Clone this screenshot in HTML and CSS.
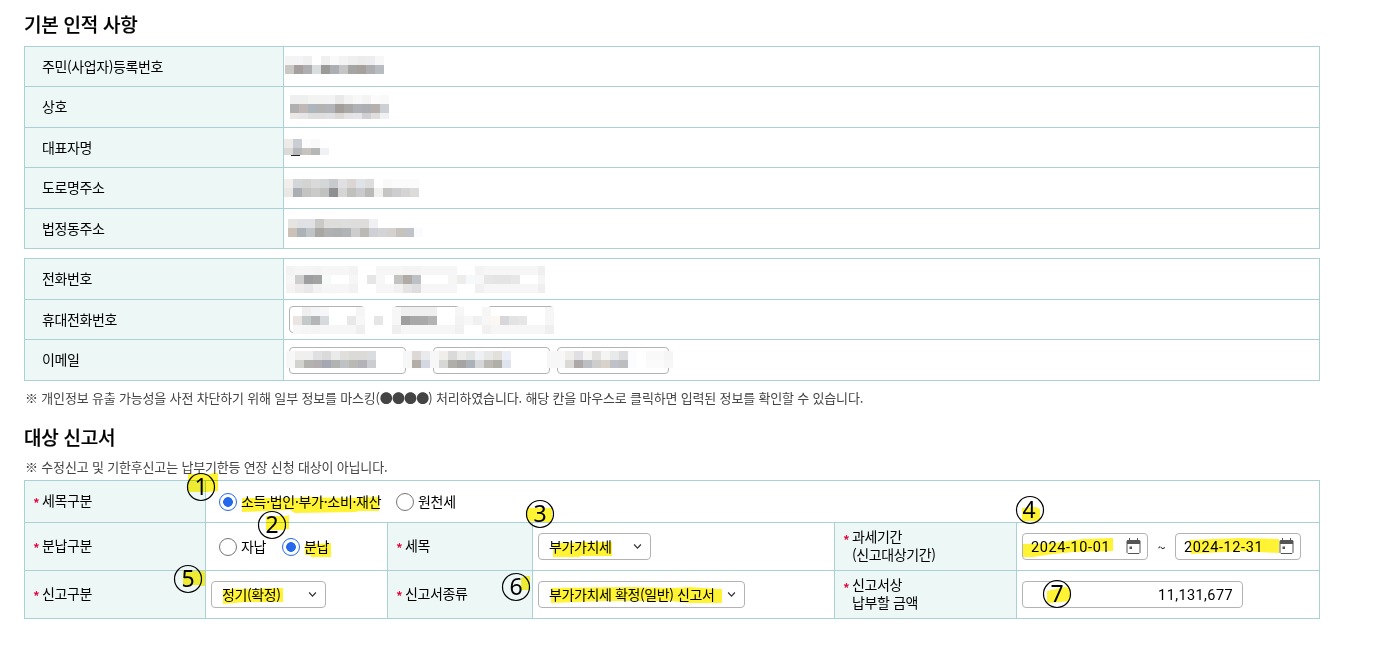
FILE: index.html
```html
<!DOCTYPE html>
<html lang="ko">
<head>
<meta charset="utf-8">
<title>납부기한등 연장 신청</title>
<link rel="stylesheet" href="styles.css">
</head>
<body>
<main class="page">
  <h2 class="title">기본 인적 사항</h2>
  <section class="table basic">
    <div class="th">주민(사업자)등록번호</div>
    <div class="td"><div class="mosaic m-reg" data-rows="f4f4f4 f4f4f6 f0f0f0 - f0f0f0 f9f9f9 f3f3f3 efefef ececec ededef f7f7f7|c9c8c5 a59f9d aeaeb0 d8dddd 9a9a98 abaeb2 c5c5c5 a5a5a3 a6a19c aeadb0 b7bcc1"></div></div>
    <div class="th">상호</div>
    <div class="td"><div class="mosaic m-name" data-rows="efefef efefef f3f3f2 f3f3f3 f3f3f3 e9e9e9 f3f3f3 f8f8f8 f4f4f4 fbfbfb f9f9f9|b1b0b1 bfb8b6 adb5bd b3b3b1 b1b5b9 a39e9a aaa8a6 afb1b6 adaeb2 b5b0ad ccd0d4|ebe7e5 e5e5e7 dededd dedede dfe0e1 dcd8d6 e3e3e4 e5e5e7 d0d0d2 e0dedd f0f1f3"></div></div>
    <div class="th">대표자명</div>
    <div class="td"><div class="mosaic m-ceo" data-rows="eeeae7 cacdd3 fcfcfc f9f9f9 fefefe|dcdad8 b7b8bc c7c3bf b5b7b5 f1f2f6"></div><i class="ceo-line"></i></div>
    <div class="th">도로명주소</div>
    <div class="td"><div class="mosaic m-road" data-rows="f2eeeb d4d7da d3d3d1 dadada d4d6d7 c9cacd e0e0e2 dbd6d3 dfe2e6 dddddd - f9f9f9 fbfbfb fbfbfb fbfbfb|e9e8e4 abafb3 c3c3c1 cacac9 c0c2c0 8f8f92 d5d5d5 c0c0bc cacace b9b9b8 f0f0ef c5c5c4 cdcdcf d5d4d3 dbdbdc"></div></div>
    <div class="th">법정동주소</div>
    <div class="td"><div class="mosaic m-law" data-rows="e5e4e0 dfe1e5 dfe1e4 c9c9c8 dfdddb dddddb dddede dddddd dedddc eff0f2 - - - - -|cbc1b7 abb3b9 c1c4c6 a9a7a1 b0b1b1 adafb0 b2b3b6 cdcdce bab9b3 cfd0d7 d3d4d6 d5d1ce c6c2bc c0c4c8 f9fbfe"></div></div>
  </section>

  <section class="table contact">
    <div class="th">전화번호</div>
    <div class="td"><div class="mosaic m-tel" data-rows="f3f3f3 f6f6f6 f5f5f5 f4f4f4 f6f6f6 f6f6f6 f6f6f6 f3f3f3 - - f6f6f6 f6f6f6 f6f6f6 f4f4f4 f4f4f4 f6f6f6 f6f6f6 f6f6f6 f6f6f6 - - f3f3f3 f6f6f6 f6f6f6 f6f6f6 f6f6f6 f6f6f6 f6f6f6 efefef|f6f6f6 cecece 9e9d9f a3a3a3 f6faf9 - - f6f6f6 - e6e6e6 f7f7f7 - c3c3c1 b1aba7 bdc1c6 - - - f6f6f6 ededec f7f8fb f7f7f7 e6e6e6 e4e4e4 e4e4e4 e7e7e7 - - f5f5f5|f3f3f3 efedec e8e8ea f2f2f2 f4f7f6 f6f6f6 f6f6f6 f2f2f2 - - f6f6f6 f6f6f6 f2f1ef e4e4e4 dedee0 f6f6f6 f6f6f6 f6f6f6 f6f6f6 - - f1f1f1 f6f6f6 f6f6f6 f6f6f6 f6f6f6 f6f6f6 f6f6f6 efefef"></div></div>
    <div class="th">휴대전화번호</div>
    <div class="td fields mobile"><i class="box"></i><i class="box"></i><i class="box"></i>
      <div class="mosaic m-mobile" data-rows="ffffff efefef f4f5f6 f7f7f9 ffffff ffffff ffffff f5f5f5 - - - f7f7f7 efefef efefef efefef efefef ffffff ffffff f6f6f6 - - f6f6f6 ffffff ffffff ffffff ffffff ffffff ffffff f6f6f6|ebe4e2 c4cac9 b4b5b6 d8d9dc ffffff ffffff e8e8e8 f7f7f7 - e6e6e6 - f7f7f7 a09f9f a8a8a8 a8a9a8 b3b3b6 ffffff ffffff f3f3f3 f7f7f7 eff0f2 f7f7f7 fdf7f3 d7d7da e2e3e5 e6e6e7 ffffff ffffff f6f6f6|f7f7f7 f5f5f5 f4f4f4 f6f6f6 f6f6f6 f6f6f6 f6f6f6 efefef - - - efefef f6f6f6 f6f6f6 f6f6f6 f6f6f6 f6f6f6 f6f6f6 f1f1f1 - - f1f1f1 f6f6f6 f6f6f6 f6f6f6 f6f6f6 f6f6f6 f6f6f6 efefef"></div></div>
    <div class="th">이메일</div>
    <div class="td fields email"><i class="box"></i><i class="box"></i><i class="box"></i>
      <div class="mosaic m-email" data-rows="f7f7f7 f0efed edf0ef dfe0e2 dadada e8ebea e0dfdc dcdad8 dbdad7 dadde0 - - - f7f7f7 ddd8d5 e9eaee f7f7f7 efeeeb dadada ebebea e1e4e3 eef0f3 e6e7e7 e3dfda ebeef6 - - - - f7f7f7 f7f7f7 efeeeb dfdfe4 f4f4f3 e3e1e0 f4f4f2 e8eae9 dddddf fcfcff - f9f9f9 f9f9f9 f5f5f5|f7f7f7 d3d3ce b4b2ae b2adae a3a8b2 b1b2b2 bfc2c4 b9b8b3 b1b3b8 cbced1 - - - f7f7f7 b3ada7 d3d8e3 f7f7f7 d7d7d5 b0aea9 a6a4a3 abb1b9 d5d6d7 bcb9b2 b1ada7 dfe3ed - - - - f7f7f7 f7f7f7 dbd9d6 aea7a8 bbbfc3 cccdcc d9d2cb bfc1c8 bcbdc1 fbfcff - fbfbfb fbfbfb f7f7f7"></div></div>
  </section>
  <p class="note note-mask">※ 개인정보 유출 가능성을 사전 차단하기 위해 일부 정보를 마스킹(<span class="dots">●●●●</span>) 처리하였습니다. 해당 칸을 마우스로 클릭하면 입력된 정보를 확인할 수 있습니다.</p>

  <h2 class="title title-report">대상 신고서</h2>
  <p class="note">※ 수정신고 및 기한후신고는 납부기한등 연장 신청 대상이 아닙니다.</p>
  <section class="table report">
    <div class="th req"><b class="star">*</b><span>세목구분</span></div>
    <div class="td wide radios"><i class="radio on"></i><span class="opt opt-kind">소득·법인·부가·소비·재산</span><i class="radio"></i><span class="opt">원천세</span></div>

    <div class="th req"><b class="star">*</b><span>분납구분</span></div>
    <div class="td radios"><i class="radio"></i><span class="opt opt-self">자납</span><i class="radio on"></i><span class="opt">분납</span></div>
    <div class="th req"><b class="star">*</b><span>세목</span></div>
    <div class="td"><div class="select s-tax"><span>부가가치세</span><svg class="chev" viewBox="0 0 8 6"><path d="M1 1.2 4 4.4 7 1.2"/></svg></div></div>
    <div class="th req two"><b class="star">*</b><span>과세기간<br>(신고대상기간)</span></div>
    <div class="td dates">
      <div class="date"><span>2024-10-01</span><svg class="cal" viewBox="0 0 15 17"><path class="fill" d="M3 0h1v2h7V0h1v2h1.5L14.5 3v3H.5V3l1-1H3z"/><path class="line" d="M1 6v8.5l1 1h11l1-1V6"/><path class="fill" d="M3.5 8.5h2.5v2.5H3.5z"/></svg></div>
      <span class="tilde">~</span>
      <div class="date"><span>2024-12-31</span><svg class="cal" viewBox="0 0 15 17"><path class="fill" d="M3 0h1v2h7V0h1v2h1.5L14.5 3v3H.5V3l1-1H3z"/><path class="line" d="M1 6v8.5l1 1h11l1-1V6"/><path class="fill" d="M3.5 8.5h2.5v2.5H3.5z"/></svg></div>
    </div>

    <div class="th req"><b class="star">*</b><span>신고구분</span></div>
    <div class="td"><div class="select s-type"><span>정기(확정)</span><svg class="chev" viewBox="0 0 8 6"><path d="M1 1.2 4 4.4 7 1.2"/></svg></div></div>
    <div class="th req"><b class="star">*</b><span>신고서종류</span></div>
    <div class="td"><div class="select s-form"><span>부가가치세 확정(일반) 신고서</span><svg class="chev" viewBox="0 0 8 6"><path d="M1 1.2 4 4.4 7 1.2"/></svg></div></div>
    <div class="th req two"><b class="star">*</b><span>신고서상<br>납부할 금액</span></div>
    <div class="td"><div class="amount">11,131,677</div></div>
  </section>

  <svg class="marker" viewBox="0 0 1394 646">
    <path d="M188 474h24v-1h6v18l-12 1h-18zM242 498l60 0v-1l45 1 32-1v14l-20 0-4 1-60 1-5-3-48 2zM266 516h20l3-1v14h-5v1h-18zM305 544l12 0 14-1v14h-20v-2h-6zM183 571h22v15h-6v-1h-16zM223 589l40 0v-1h20v14l-38 0-22 2zM527 508h25v14h-12l-13-1zM553 543l28 0v-1h31v14h-31l-2 1h-26zM521 578l5-2h4v14h-9zM551 588l78-1 45 1 16-1 27 2h5v14h-5l-26 0-20-2-70 0-50 2zM1022 508l14-1 4 2v11l-4 1h-14zM1023 544l32-1 28-4 30-1v13l-40 1-20 2-20 3h-10zM1189 540l26-1 25-1 39 1v14l-38-2-36 2-14 1zM1047 591l18-4 5 1v13l-20 2-3-1z"/>
  </svg>
  <svg class="steps" viewBox="0 0 1394 646">
    <g><circle cx="201" cy="487" r="13.5"/><text x="201" y="495">1</text></g>
    <g><circle cx="272" cy="525" r="13.5"/><text x="272" y="533">2</text></g>
    <g><circle cx="540" cy="514" r="13.5"/><text x="540" y="522">3</text></g>
    <g><circle cx="1030" cy="510" r="13.5"/><text x="1029" y="518">4</text></g>
    <g><circle cx="188" cy="579" r="13.5"/><text x="188" y="587">5</text></g>
    <g><circle cx="516" cy="587" r="13.5"/><text x="516" y="595">6</text></g>
    <g><circle cx="1057" cy="594" r="13.5"/><text x="1057" y="602">7</text></g>
  </svg>
</main>
<script src="mosaic.js"></script>
</body>
</html>
```
FILE: styles.css
```css
* { box-sizing: border-box; }
body {
  margin: 0;
  background: #fff;
  color: #000;
  font: 400 14px/20px "Noto Sans CJK KR", sans-serif;
  letter-spacing: -0.4px;
}
.page {
  position: relative;
  width: 1394px;
  height: 646px;
  padding: 10px 0 0 24px;
  overflow: hidden;
}
.title {
  height: 36px;
  margin: 0;
  font-size: 19px;
  line-height: 28px;
  font-weight: 500;
  letter-spacing: -0.25px;
  -webkit-text-stroke: 0.2px #000;
}
.title-report { height: 33px; margin-top: 15px; }
.note {
  height: 24px;
  margin: 0;
  padding-left: 1px;
  font-size: 13px;
  line-height: 21px;
  color: #444;
  letter-spacing: -0.17px;
}
.note-mask { margin-top: 7px; height: 20px; line-height: 20px; }
.dots { letter-spacing: -0.9px; }
.table {
  display: grid;
  width: 1296px;
  border: solid #aad1d4;
  border-width: 1px 0 0 1px;
}
.th, .td {
  position: relative;
  display: flex;
  align-items: center;
  border: solid #aad1d4;
  border-width: 0 1px 1px 0;
}
.th { padding: 0 0 2px 17px; background: #edf7f6; }
.basic, .contact { grid-template-columns: 259px 1036px; }
.basic { grid-template-rows: 40px 41px 40px 41px 40px; }
.contact { grid-template-rows: 41px 40px 41px; margin-top: 9px; }
.report {
  grid-template-columns: 181px 182px 145px 302px 182px 303px;
  grid-template-rows: 42px 48px 48px;
}
.wide { grid-column: span 5; }
.report .td { padding-left: 5px; }
.req { padding-left: 8px; padding-bottom: 3px; line-height: 18px; }
.star {
  width: 9px;
  padding-top: 5px;
  color: #e60039;
  font-size: 14px;
  font-weight: 500;
}
.two { align-items: flex-start; padding-top: 4px; }
.two .star { padding-top: 4px; }

.mosaic { position: absolute; }
.mosaic svg { display: block; }
.m-reg { left: 1px; top: 9px; }
.m-name { left: 6px; top: 8px; }
.m-ceo { left: 0; top: 11px; }
.m-road { left: 0; top: 11px; }
.m-law { left: 4px; top: 10px; }
.m-tel { left: 2px; top: 7px; width: 259px; overflow: hidden; }
.m-mobile { left: 9px; top: 7px; }
.m-email { left: 2px; top: 11px; }
.ceo-line { position: absolute; left: 7px; top: 27px; width: 9px; height: 1px; background: #222; }

.fields { padding-left: 5px; }
.box { height: 27px; border: 1px solid #b3b3b3; border-radius: 4px; }
.mobile .box { width: 76px; }
.mobile .box:nth-child(2) { width: 67px; margin-left: 28px; }
.mobile .box:nth-child(3) { width: 67px; margin-left: 27px; }
.email .box { width: 117px; }
.email .box:nth-child(2) { margin-left: 27px; }
.email .box:nth-child(3) { width: 112px; margin-left: 7px; }

.report .radios { padding-left: 13px; }
.radio {
  width: 18px;
  height: 18px;
  margin-right: 4px;
  border: 1px solid #767676;
  border-radius: 50%;
  background: #fff;
}
.radio.on {
  border-color: #2468eb;
  background: radial-gradient(circle, #2468eb 4.5px, #fff 5.2px);
}
.opt { padding-bottom: 2px; letter-spacing: -0.3px; }
.opt-kind { width: 155px; }
.opt-self { width: 41px; }

.select, .date, .amount {
  display: flex;
  align-items: center;
  justify-content: space-between;
  height: 27px;
  border: 1px solid #b3b3b3;
  border-radius: 4px;
  background: #fff;
}
.select { padding: 0 8px 0 10px; }
.select span { padding-bottom: 1px; }
.s-tax { width: 113px; }
.s-type { width: 115px; }
.s-form { width: 207px; }
.chev { width: 9px; height: 7px; fill: none; stroke: #333; stroke-width: 1.1; }
.date, .amount { font-family: Roboto, sans-serif; font-size: 14.5px; letter-spacing: 0.4px; }
.date { width: 126px; padding: 0 6px 0 8px; letter-spacing: 0.6px; }
.date span, .amount { padding-top: 2px; }
.cal { width: 15px; height: 17px; }
.cal .fill { fill: #555; }
.cal .line { fill: none; stroke: #555; }
.tilde { width: 27px; text-align: center; }
.amount { width: 221px; padding-right: 9px; justify-content: flex-end; }

.marker, .steps { position: absolute; left: 0; top: 0; width: 1394px; height: 646px; }
.marker { fill: #fff333; mix-blend-mode: multiply; }
.steps circle { fill: none; stroke: #000; stroke-width: 1.2; }
.steps text {
  font: 23px "Noto Sans", sans-serif;
  letter-spacing: 0;
  text-anchor: middle;
  fill: #000;
}
```
FILE: mosaic.js
```js
// Each masked value is a grid of 9px colour cells: rows split by "|", "-" is an empty cell.
const CELL = 9;
const NS = "http://www.w3.org/2000/svg";
const SHORT = { "m-name": 24, "m-ceo": 16, "m-email": 17 };

document.querySelectorAll(".mosaic").forEach((el) => {
  const rows = el.dataset.rows.split("|").map((r) => r.split(" "));
  const svg = document.createElementNS(NS, "svg");
  svg.setAttribute("width", rows[0].length * CELL);
  svg.setAttribute("height", SHORT[el.classList[1]] || rows.length * CELL);
  svg.setAttribute("shape-rendering", "crispEdges");
  rows.forEach((row, y) => row.forEach((color, x) => {
    if (color === "-") return;
    const cell = document.createElementNS(NS, "rect");
    cell.setAttribute("x", x * CELL);
    cell.setAttribute("y", y * CELL);
    cell.setAttribute("width", CELL);
    cell.setAttribute("height", CELL);
    cell.setAttribute("fill", "#" + color);
    svg.appendChild(cell);
  }));
  el.appendChild(svg);
});
```
